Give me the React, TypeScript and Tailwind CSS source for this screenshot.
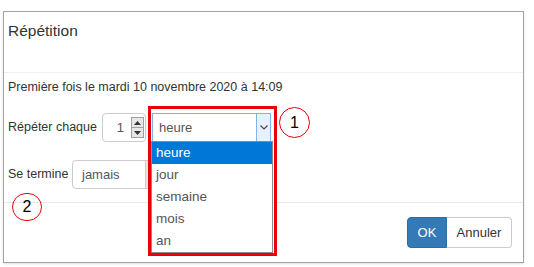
import React from "react";

const options = ["heure", "jour", "semaine", "mois", "an"];

const Spinner = () => (
  <div className="flex flex-col w-[13px] h-[21px] border border-[#a0a0a0] bg-[#e6e6e6]">
    <div className="flex-1 flex items-center justify-center border-b border-[#a0a0a0]">
      <svg width="7" height="4" viewBox="0 0 7 4">
        <path d="M3.5 0 L7 4 L0 4 Z" fill="#333" />
      </svg>
    </div>
    <div className="flex-1 flex items-center justify-center">
      <svg width="7" height="4" viewBox="0 0 7 4">
        <path d="M0 0 L7 0 L3.5 4 Z" fill="#333" />
      </svg>
    </div>
  </div>
);

const App = () => {
  return (
    <div className="w-[534px] h-[267px] bg-white pt-[11px] pl-[3px] font-['Liberation_Sans',Arial,sans-serif] text-[#333]">
      <div className="relative w-[521px] h-[252px] border border-[#a3a3a3] bg-white flex flex-col shadow-[0_1px_2px_rgba(0,0,0,0.12)]">
        {/* header */}
        <div className="h-[61px] border-b border-[#efefef] pl-[4px] pt-[9px]">
          <h1 className="text-[15.5px] leading-[20px] text-[#333]">Répétition</h1>
        </div>

        {/* body */}
        <div className="h-[129px] pl-[4px] pt-[6px] text-[12.5px]">
          <p className="leading-[16px]">Première fois le mardi 10 novembre 2020 à 14:09</p>

          <div className="flex items-center mt-[18px] h-[29px]">
            <span className="w-[94px]">Répéter chaque</span>
            <div className="flex items-center justify-end w-[44px] h-[29px] border border-[#ccc] rounded-[4px] pr-[1px] gap-[7px]">
              <span className="text-[13px] text-[#555]">1</span>
              <Spinner />
            </div>
            <div className="relative ml-[6px] w-[119px] h-[29px]">
              <div className="flex items-center w-full h-full border border-[#7eb4ea] bg-white">
                <span className="flex-1 pl-[6px] text-[13px] text-[#555]">heure</span>
                <div className="w-[14px] h-full bg-[#e5f1fb] border-l border-[#7eb4ea] flex items-center justify-center">
                  <svg width="8" height="5" viewBox="0 0 8 5">
                    <path d="M0.5 0.5 L4 4 L7.5 0.5" stroke="#444" strokeWidth="1.1" fill="none" />
                  </svg>
                </div>
              </div>
              <ul className="absolute left-[-1px] top-[28px] w-[122px] border border-[#8a8a8a] bg-white z-10 text-[13.5px]">
                {options.map((o, i) => (
                  <li
                    key={o}
                    className={
                      i === 0
                        ? "h-[22px] leading-[22px] pl-[4px] bg-[#0078d7] text-white"
                        : "h-[22px] leading-[22px] pl-[4px] text-[#555]"
                    }
                  >
                    {o}
                  </li>
                ))}
              </ul>
            </div>
          </div>

          <div className="flex items-center mt-[18px] h-[29px]">
            <span className="w-[64px]">Se termine</span>
            <div className="flex items-center w-[94px] h-[29px] border border-[#ccc] rounded-[4px] overflow-hidden">
              <span className="flex-1 pl-[9px] text-[13px] text-[#555]">jamais</span>
              <div className="w-[20px] h-full bg-[#e6e6e6] border-l border-[#ccc]" />
            </div>
          </div>
        </div>

        {/* footer */}
        <div className="flex-1 border-t border-[#e8e8e8] flex justify-end items-start pt-[14px] pr-[11px]">
          <div className="flex text-[13px]">
            <button className="w-[40px] h-[31px] bg-[#337ab7] border border-[#2e6da4] text-white rounded-l-[4px]">
              OK
            </button>
            <button className="w-[65px] h-[31px] bg-white border border-l-0 border-[#ccc] text-[#333] rounded-r-[4px]">
              Annuler
            </button>
          </div>
        </div>

        {/* annotations */}
        <div className="absolute left-[144px] top-[94px] w-[129px] h-[150px] border-[3px] border-[#e8000b] z-20 pointer-events-none" />
        <div className="absolute left-[275px] top-[95px] w-[31px] h-[31px] rounded-full border-[1.5px] border-[#e8000b] flex items-center justify-center text-[16px] text-black z-20">
          1
        </div>
        <div className="absolute left-[8px] top-[181px] w-[30px] h-[28px] rounded-full border-[1.5px] border-[#e8000b] flex items-center justify-center text-[16px] text-black z-20">
          2
        </div>
      </div>
    </div>
  );
};

export default App;
